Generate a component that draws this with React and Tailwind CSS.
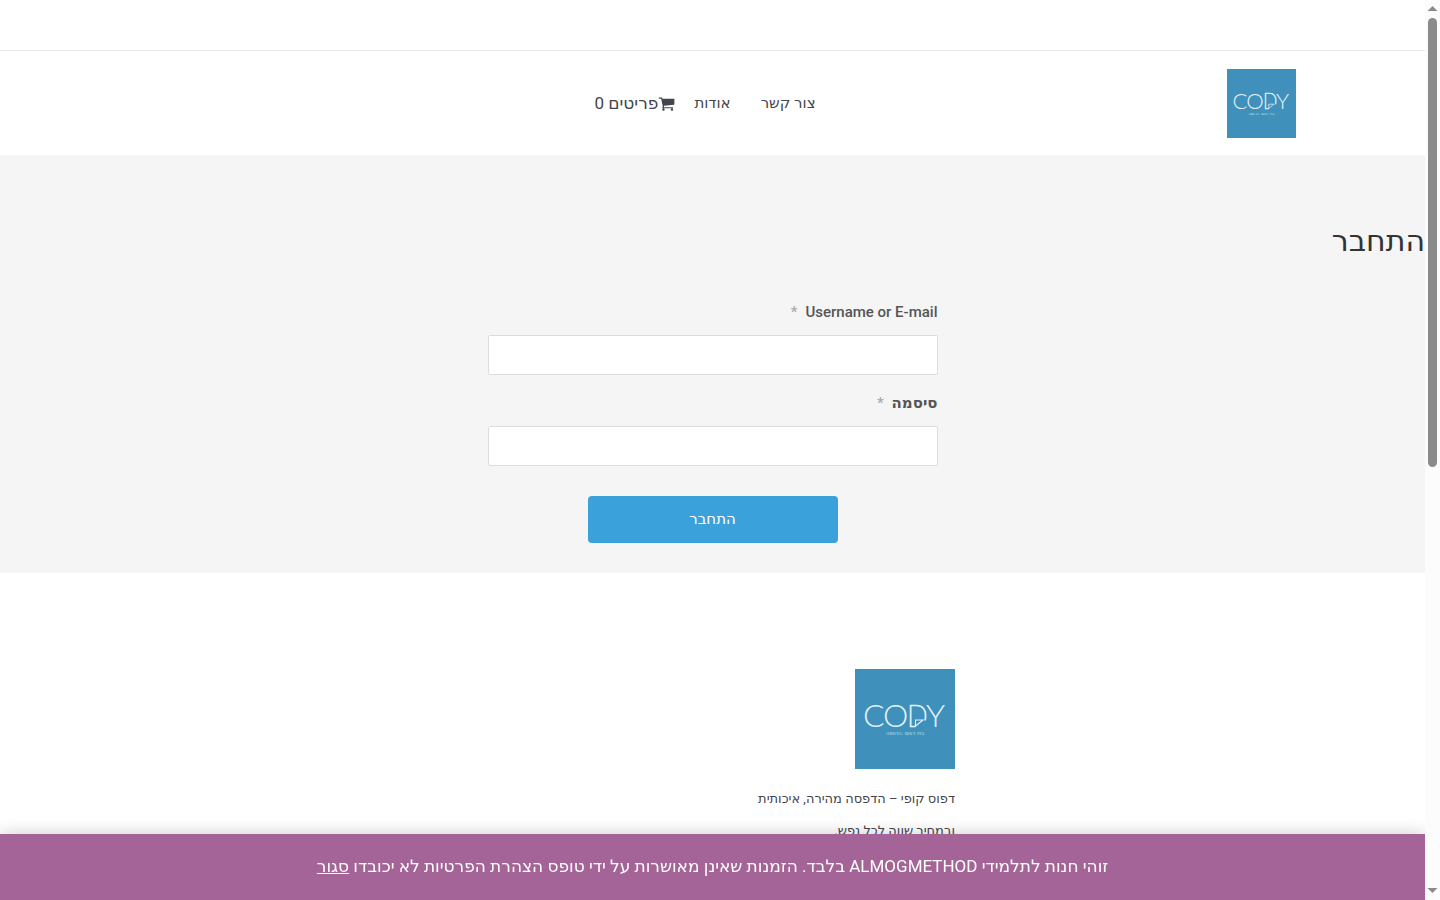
import React from "react";

const navLinks = ["צור קשר", "אודות"];

const Logo = ({ className }) => (
  <svg viewBox="0 0 100 100" className={className} role="img" aria-label="COPY">
    <rect width="100" height="100" fill="#3f90ba" />
    <g fill="#e4f2f8" fontFamily="Lato, sans-serif" fontWeight="300" fontSize="32" direction="ltr">
      <text x="8" y="58">C</text>
      <text x="28" y="58">O</text>
      <text x="52" y="58" fontFamily="Roboto, sans-serif" fontWeight="100" stroke="#e4f2f8" strokeWidth="0.6">D</text>
      <text x="71" y="58">Y</text>
    </g>
    <path d="M60.5 59.5V57L66.5 51.5H72V59.5Z" fill="#3f90ba" />
    <path d="M60 57.5L68 51H60.5V57.5" fill="none" stroke="#e4f2f8" strokeWidth="1.1" />
    <text
      x="50"
      y="66"
      fill="#c6e0ec"
      fontFamily="DejaVu Sans, sans-serif"
      fontSize="5"
      textAnchor="middle"
      direction="rtl"
    >
      בתי דפוס .הדפסה
    </text>
  </svg>
);

const CartIcon = () => (
  <svg viewBox="0 0 1792 1792" className="w-[17px] h-[17px]" fill="currentColor" aria-hidden="true">
    <path d="M704 1536q0 52-38 90t-90 38-90-38-38-90 38-90 90-38 90 38 38 90zm896 0q0 52-38 90t-90 38-90-38-38-90 38-90 90-38 90 38 38 90zm128-1088v512q0 24-16.5 42.5t-40.5 21.5l-1044 122q13 60 13 70 0 16-24 64h920q26 0 45 19t19 45-19 45-45 19h-1024q-26 0-45-19t-19-45q0-11 8-31.5t16-36 21.5-40 15.5-29.5l-177-823h-204q-26 0-45-19t-19-45 19-45 45-19h256q16 0 28.5 6.5t19.5 15.5 13 24.5 8 26 5.5 29.5 4.5 26h1201q26 0 45 19t19 45z" />
  </svg>
);

const Header = () => (
  <header>
    <div className="h-[51px] border-b border-[#ebebeb]" />
    <div className="grid grid-cols-[1fr_auto_1fr] items-center h-[104px] px-[129px]">
      <a href="#" className="justify-self-start">
        <Logo className="w-[69px] h-[69px]" />
      </a>
      <nav className="flex items-center text-[15px]">
        {navLinks.map((link) => (
          <a key={link} href="#" className="px-[15px]">
            {link}
          </a>
        ))}
        <a href="#" className="flex items-center text-[17px] leading-6 ps-1">
          <CartIcon />
          <span>פריטים 0</span>
        </a>
      </nav>
    </div>
  </header>
);

const Field = ({ id, type, label }) => (
  <div className="pb-4">
    <label htmlFor={id} className="flex gap-2 h-[35px] text-[15px] leading-[25px] font-bold text-[#555]">
      {label}
      <span className="font-medium text-[#aaa]">*</span>
    </label>
    <input
      id={id}
      type={type}
      className="block w-full h-10 px-3 bg-white border border-[#ddd] rounded-xs outline-none"
    />
  </div>
);

const LoginForm = () => (
  <main className="bg-[#f5f5f5] pt-16 pb-[30px]">
    <h1 className="text-[30px] leading-[44px] text-[#333]">התחבר</h1>
    <form className="w-full max-w-[450px] mx-auto pt-[37px]" onSubmit={(e) => e.preventDefault()}>
      <Field id="username" type="text" label={<span className="font-medium">Username or E-mail</span>} />
      <Field id="password" type="password" label="סיסמה" />
      <button className="block w-[250px] h-[47px] mx-auto mt-[14px] rounded-sm bg-[#3ba1da] text-white text-[15px]">
        התחבר
      </button>
    </form>
  </main>
);

const Footer = () => (
  <footer className="w-full max-w-[485px] mx-auto pt-24">
    <Logo className="w-[100px] h-[100px]" />
    <p className="w-[215px] pt-[14px] text-[13px] leading-8">
      דפוס קופי – הדפסה מהירה, איכותית ובמחיר שווה לכל נפש.
    </p>
  </footer>
);

const Notice = () => (
  <div className="fixed bottom-0 left-0 right-[15px] h-[66px] flex items-center justify-center bg-[#a46497] text-white text-[17px] shadow-[0_0_16px_rgba(0,0,0,0.2)]">
    <p>
      זוהי חנות לתלמידי ALMOGMETHOD בלבד. הזמנות שאינן מאושרות על ידי טופס הצהרת הפרטיות לא יכובדו{" "}
      <a href="#" className="underline">
        סגור
      </a>
    </p>
  </div>
);

const ScrollRail = () => (
  <div className="fixed inset-y-0 right-0 w-[15px] bg-[#fcfcfc] flex flex-col items-center justify-between" aria-hidden="true">
    <svg viewBox="0 0 15 18" className="w-[15px] h-[18px]">
      <path d="M7.5 6L12.5 11H2.5Z" fill="#8b8b8b" />
    </svg>
    <div className="flex-1 w-[9px]">
      <div className="h-[52%] rounded-full bg-[#8b8b8b]" />
    </div>
    <svg viewBox="0 0 15 18" className="w-[15px] h-[18px]">
      <path d="M7.5 11L12.5 6H2.5Z" fill="#8b8b8b" />
    </svg>
  </div>
);

const App = () => {
  return (
    <div
      dir="rtl"
      lang="he"
      className="min-h-screen pr-[15px] bg-white text-[#43454b] font-['Roboto','DejaVu_Sans',sans-serif]"
    >
      <Header />
      <LoginForm />
      <Footer />
      <Notice />
      <ScrollRail />
    </div>
  );
};

export default App;
